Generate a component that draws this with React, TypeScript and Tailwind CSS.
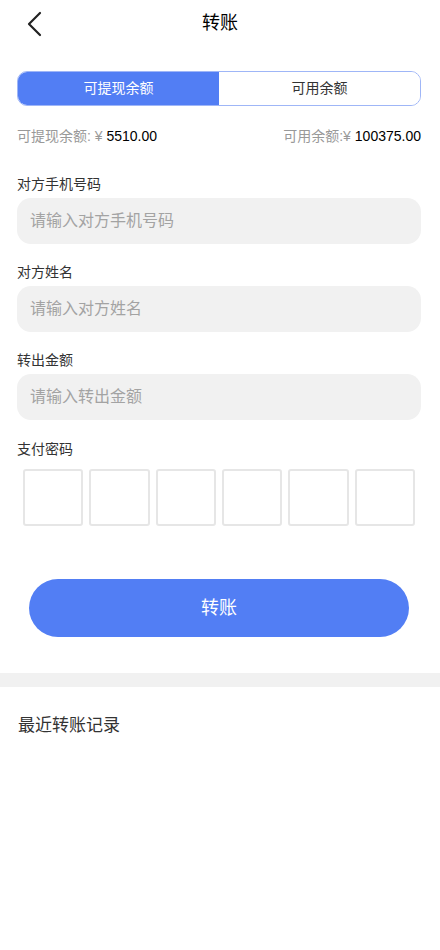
import React, { useState } from 'react';

const font = { fontFamily: '"Liberation Sans", "Noto Sans CJK SC", sans-serif' };

const Field = ({ label, placeholder }: { label: string; placeholder: string }) => (
  <div className="mt-[18px]">
    <div className="text-[14px] leading-[20px] text-[#333]">{label}</div>
    <input
      className="mt-[4px] w-full h-[46px] rounded-[14px] bg-[#f1f1f1] px-[13px] text-[16px] text-[#333] placeholder:text-[#a3a3a3] outline-none"
      placeholder={placeholder}
    />
  </div>
);

export default function App() {
  const [tab, setTab] = useState(0);

  return (
    <div className="w-[440px] min-h-[950px] bg-white" style={font}>
      {/* header */}
      <div className="relative h-[46px] flex items-center justify-center">
        <button className="absolute left-[24px] top-[10px] w-[22px] h-[28px] flex items-center justify-center">
          <svg width="18" height="26" viewBox="0 0 18 26" fill="none">
            <polyline points="14,2 3,13 14,24" stroke="#222" strokeWidth="2.2" strokeLinecap="round" strokeLinejoin="round" />
          </svg>
        </button>
        <div className="text-[18px] text-black">转账</div>
      </div>

      <div className="pl-[17px] pr-[19px]">
        {/* tabs */}
        <div className="mt-[25px] flex h-[35px] rounded-[10px] border border-[#9fb6f7] overflow-hidden">
          <button
            onClick={() => setTab(0)}
            className={`flex-1 text-[14px] ${tab === 0 ? 'bg-[#527ef4] text-white' : 'bg-white text-[#333]'}`}
          >
            可提现余额
          </button>
          <button
            onClick={() => setTab(1)}
            className={`flex-1 text-[14px] ${tab === 1 ? 'bg-[#527ef4] text-white' : 'bg-white text-[#333]'}`}
          >
            可用余额
          </button>
        </div>

        {/* balances */}
        <div className="mt-[20px] flex justify-between text-[14px] leading-[20px]">
          <div>
            <span className="text-[#999]">可提现余额: ¥</span>
            <span className="text-black"> 5510.00</span>
          </div>
          <div>
            <span className="text-[#999]">可用余额:¥</span>
            <span className="text-black"> 100375.00</span>
          </div>
        </div>

        <div className="pt-[10px]">
          <Field label="对方手机号码" placeholder="请输入对方手机号码" />
          <Field label="对方姓名" placeholder="请输入对方姓名" />
          <Field label="转出金额" placeholder="请输入转出金额" />
        </div>

        {/* password */}
        <div className="mt-[19px]">
          <div className="text-[14px] leading-[20px] text-[#333]">支付密码</div>
          <div className="mt-[10px] px-[6px] grid grid-cols-6 gap-[6px]">
            {[0, 1, 2, 3, 4, 5].map(i => (
              <div key={i} className="h-[57px] rounded-[3px] border-2 border-[#e6e6e6]" />
            ))}
          </div>
        </div>

        <div className="px-[12px] mt-[53px]">
          <button className="w-full h-[58px] rounded-full bg-[#527ef4] text-white text-[18px]">转账</button>
        </div>
      </div>

      <div className="mt-[36px] h-[14px] bg-[#f1f1f1]" />

      <div className="px-[18px] pt-[26px] text-[17px] text-[#333]">最近转账记录</div>
    </div>
  );
}
